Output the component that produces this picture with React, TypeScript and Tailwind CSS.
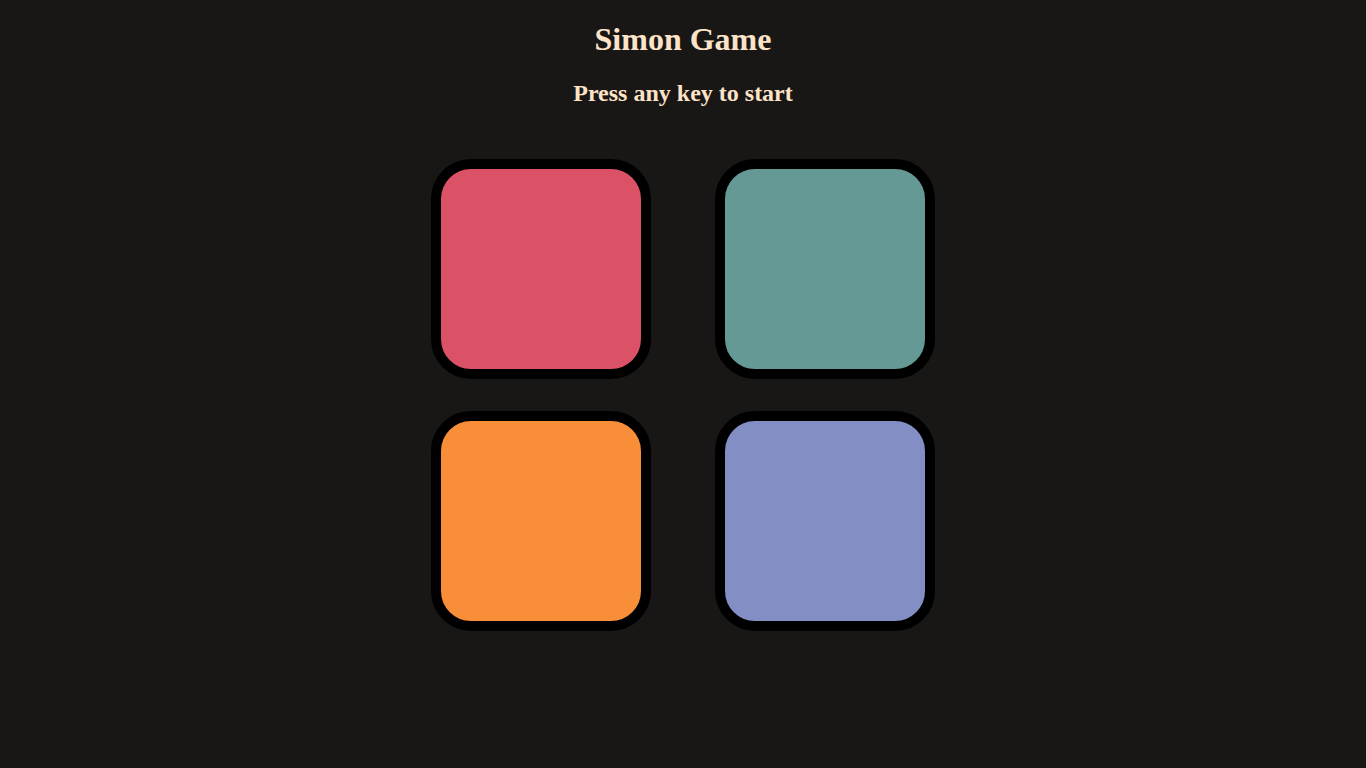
export default function App() {
  const colors = ["bg-[#db5166]", "bg-[#659996]", "bg-[#f98e39]", "bg-[#828ec4]"];
  return (
    <div className="min-h-screen bg-[#181716] text-[#fde3c7] text-center" style={{ fontFamily: '"Liberation Serif", serif' }}>
      <div className="h-[21px]" />
      <h1 className="text-[32px] leading-[37px] font-bold">Simon Game</h1>
      <h2 className="mt-[21px] text-[24px] leading-[28px] font-bold">Press any key to start</h2>
      <div className="flex justify-center mt-[52px]">
        <div className="grid grid-cols-[220px_220px] gap-x-[64px] gap-y-[32px]">
          {colors.map((c) => (
            <div key={c} className={`w-[220px] h-[220px] border-[10px] border-black rounded-[40px] ${c}`} />
          ))}
        </div>
      </div>
    </div>
  );
}
